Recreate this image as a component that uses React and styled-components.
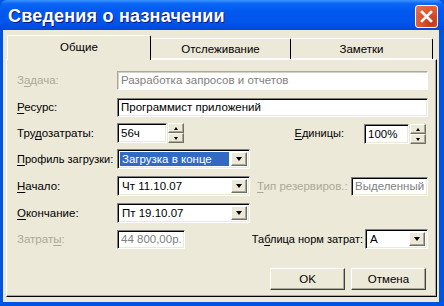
import React from 'react';
import styled, { createGlobalStyle, css } from 'styled-components';

const GlobalStyle = createGlobalStyle`
  html, body {
    margin: 0;
    padding: 0;
    background: #0054E3;
  }
  body {
    font-family: "Liberation Sans", Arial, sans-serif;
    font-size: 11.5px;
    color: #000;
  }
`;

const raised = css`
  box-sizing: border-box;
  background: #ECE9D8;
  border: 1px solid;
  border-color: #FFFFFF #716F64 #716F64 #FFFFFF;
  box-shadow: inset -1px -1px #ACA899;
`;

const sunken = css`
  box-sizing: border-box;
  background: #FFFFFF;
  border: 1px solid;
  border-color: #808080 #FFFFFF #FFFFFF #808080;
  box-shadow: inset 1px 1px #000000, inset -1px -1px #ECE9D8;
`;

const Window = styled.div`
  width: 444px;
  height: 306px;
  display: flex;
  flex-direction: column;
  background: #0054E3;
  border-radius: 7px 7px 0 0;
  overflow: hidden;
`;

const TitleBar = styled.div`
  height: 30px;
  flex: none;
  display: flex;
  align-items: center;
  justify-content: space-between;
  padding: 0 6px 0 8px;
  background: linear-gradient(to bottom, #3D95FF 0%, #0A66F5 12%, #0058EE 40%, #0055EA 75%, #0048DA 100%);
`;

const Title = styled.div`
  color: #FFFFFF;
  font-weight: bold;
  font-size: 18px;
  letter-spacing: 0.2px;
  text-shadow: 1px 1px #0A1883;
  padding-top: 3px;
`;

const CloseButton = styled.div`
  width: 23px;
  height: 23px;
  margin-top: 3px;
  box-sizing: border-box;
  border: 1px solid #FFFFFF;
  border-radius: 3px;
  background: radial-gradient(circle at 75% 80%, #C0391A 0%, #DC5530 50%, #E8754F 100%);
  display: flex;
  align-items: center;
  justify-content: center;
`;

const Body = styled.div`
  flex: 1;
  display: flex;
  flex-direction: column;
  margin: 0 5px 4px 3px;
  padding: 5px 2px 5px 3px;
  background: #ECE9D8;
`;

const TabStrip = styled.div`
  display: flex;
  align-items: flex-end;
  height: 24px;
  padding-left: 1px;
  position: relative;
  z-index: 1;
`;

const Tab = styled.div`
  box-sizing: border-box;
  width: ${p => p.$w}px;
  height: ${p => (p.$active ? 25 : 21)}px;
  margin-bottom: ${p => (p.$active ? -1 : 0)}px;
  display: flex;
  align-items: center;
  justify-content: center;
  padding-bottom: ${p => (p.$active ? 2 : 0)}px;
  background: #ECE9D8;
  border-top: 1px solid #FFFFFF;
  border-left: ${p => (p.$active ? '1px solid #FFFFFF' : 'none')};
  border-right: 1px solid #000000;
  box-shadow: ${p => (p.$active ? 'none' : 'inset 0 -1px #FFFFFF')};
  border-radius: 2px 2px 0 0;
`;

const Panel = styled.div`
  flex: 1;
  box-sizing: border-box;
  border: 1px solid;
  border-color: #FFFFFF #000000 #000000 #FFFFFF;
  box-shadow: inset -1px -1px #ACA899;
  padding: 10px 8px 0 10px;
  display: flex;
  flex-direction: column;
`;

const Row = styled.div`
  display: flex;
  align-items: center;
  height: 20px;
  margin-top: ${p => p.$top || 0}px;
`;

const Label = styled.div`
  flex: none;
  width: ${p => (p.$w ? `${p.$w}px` : 'auto')};
  margin-left: ${p => p.$ml || 0}px;
  font-size: ${p => p.$fs || 11.5}px;
  color: ${p => (p.$disabled ? '#ACA899' : '#000000')};
  white-space: nowrap;
  u { text-decoration-thickness: 1px; text-underline-offset: 2px; }
`;

const Spacer = styled.div`
  flex: 1;
`;

const Field = styled.div`
  ${p => (p.$disabled ? css`
    box-sizing: border-box;
    background: #FFFFFF;
    border: 1px solid;
    border-color: #ACA899 #FFFFFF #FFFFFF #ACA899;
    box-shadow: inset 1px 1px #D4D0C8;
  ` : sunken)}
  flex: ${p => (p.$w ? 'none' : 1)};
  width: ${p => (p.$w ? `${p.$w}px` : 'auto')};
  height: ${p => p.$h || 19}px;
  display: flex;
  align-items: center;
  padding: 0 3px;
  color: ${p => (p.$gray ? '#808080' : '#000000')};
  white-space: nowrap;
  overflow: hidden;
`;

const ComboBox = styled.div`
  ${sunken}
  flex: none;
  width: ${p => p.$w}px;
  height: 20px;
  margin-left: ${p => p.$ml || 0}px;
  display: flex;
  align-items: stretch;
  padding: 2px;
`;

const ComboText = styled.div`
  flex: 1;
  display: flex;
  align-items: center;
  padding-left: 2px;
  margin-right: 2px;
  background: ${p => (p.$selected ? '#316AC5' : 'transparent')};
  color: ${p => (p.$selected ? '#FFFFFF' : '#000000')};
  white-space: nowrap;
`;

const DropButton = styled.div`
  ${raised}
  flex: none;
  width: 16px;
  display: flex;
  align-items: center;
  justify-content: center;
`;

const Arrow = styled.div`
  width: 0;
  height: 0;
  border-left: ${p => p.$size || 3.5}px solid transparent;
  border-right: ${p => p.$size || 3.5}px solid transparent;
  ${p => (p.$up
    ? `border-bottom: ${Math.ceil(p.$size || 3.5)}px solid #000;`
    : `border-top: ${Math.ceil(p.$size || 3.5)}px solid #000;`)}
`;

const SpinWrap = styled.div`
  flex: none;
  display: flex;
  margin-left: ${p => p.$ml || 0}px;
  margin-right: ${p => p.$mr || 0}px;
  margin-top: ${p => p.$mt || 0}px;
`;

const SpinButtons = styled.div`
  flex: none;
  width: 16px;
  display: flex;
  flex-direction: column;
  margin-left: 1px;
`;

const SpinButton = styled.div`
  ${raised}
  flex: 1;
  display: flex;
  align-items: center;
  justify-content: center;
`;

const ButtonRow = styled.div`
  display: flex;
  justify-content: flex-end;
  gap: 6px;
  margin-top: 19px;
  margin-right: 2px;
`;

const PushButton = styled.div`
  ${raised}
  width: 75px;
  height: 22px;
  display: flex;
  align-items: center;
  justify-content: center;
  border-color: #FFFFFF #404040 #404040 #FFFFFF;
`;

function Spin({ value, width, ml, mr, mt }) {
  return (
    <SpinWrap $ml={ml} $mr={mr} $mt={mt}>
      <Field $w={width} $h={20}>{value}</Field>
      <SpinButtons>
        <SpinButton><Arrow $up $size={2.5} /></SpinButton>
        <SpinButton><Arrow $size={2.5} /></SpinButton>
      </SpinButtons>
    </SpinWrap>
  );
}

function Combo({ value, width, ml, selected }) {
  return (
    <ComboBox $w={width} $ml={ml}>
      <ComboText $selected={selected}>{value}</ComboText>
      <DropButton><Arrow /></DropButton>
    </ComboBox>
  );
}

const tabs = [
  { label: 'Общие', width: 144, active: true },
  { label: 'Отслеживание', width: 140 },
  { label: 'Заметки', width: 142 },
];

export default function App() {
  return (
    <>
      <GlobalStyle />
      <Window>
        <TitleBar>
          <Title>Сведения о назначении</Title>
          <CloseButton>
            <svg width="13" height="13" viewBox="0 0 13 13">
              <path d="M2 2 L11 11 M11 2 L2 11" stroke="#FFFFFF" strokeWidth="2.6" strokeLinecap="square" />
            </svg>
          </CloseButton>
        </TitleBar>
        <Body>
          <TabStrip>
            {tabs.map(t => (
              <Tab key={t.label} $w={t.width} $active={t.active}>{t.label}</Tab>
            ))}
          </TabStrip>
          <Panel>
            <Row>
              <Label $w={100} $disabled>З<u>а</u>дача:</Label>
              <Field $disabled $gray>Разработка запросов и отчетов</Field>
            </Row>
            <Row $top={7}>
              <Label $w={100}><u>Р</u>есурс:</Label>
              <Field>Программист приложений</Field>
            </Row>
            <Row $top={6}>
              <Label $w={100}>Тру<u>д</u>озатраты:</Label>
              <Spin value="56ч" width={50} />
              <Spacer />
              <Label $fs={11}><u>Е</u>диницы:</Label>
              <Spin value="100%" width={45} ml={20} mr={2} mt={2} />
            </Row>
            <Row $top={6}>
              <Label $w={100} $fs={11}><u>П</u>рофиль загрузки:</Label>
              <Combo value="Загрузка в конце" width={133} selected />
            </Row>
            <Row $top={7}>
              <Label $w={100}><u>Н</u>ачало:</Label>
              <Combo value="Чт 11.10.07" width={133} />
              <Label $ml={7} $disabled><u>Т</u>ип резервиров.:</Label>
              <Spacer />
              <Field $w={77} $gray>Выделенный</Field>
            </Row>
            <Row $top={7}>
              <Label $w={100}><u>О</u>кончание:</Label>
              <Combo value="Пт 19.10.07" width={133} />
            </Row>
            <Row $top={6}>
              <Label $w={100} $disabled>Затрат<u>ы</u>:</Label>
              <Field $w={68} $gray>44 800,00р.</Field>
              <Spacer />
              <Label $fs={11}>Та<u>б</u>лица норм затрат:</Label>
              <Combo value="A" width={63} ml={2} />
            </Row>
            <ButtonRow>
              <PushButton>OK</PushButton>
              <PushButton>Отмена</PushButton>
            </ButtonRow>
          </Panel>
        </Body>
      </Window>
    </>
  );
}
